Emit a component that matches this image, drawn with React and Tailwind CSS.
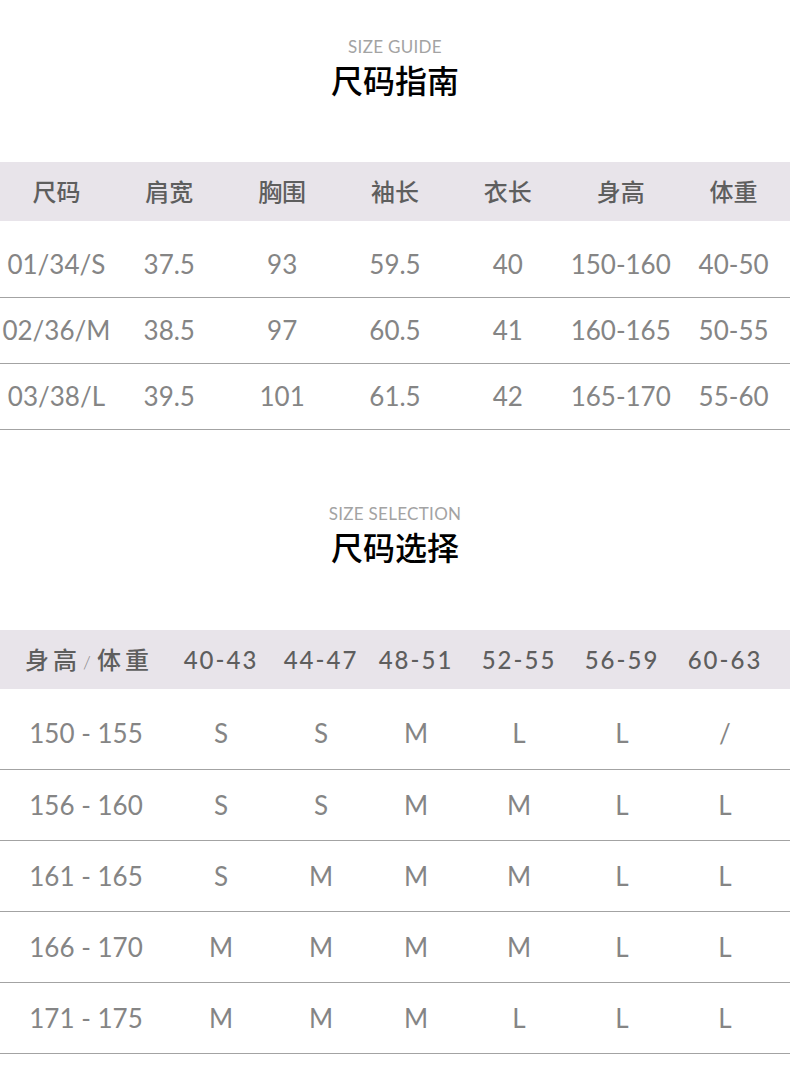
import React from 'react'

const FONT = "font-['Lato','Noto_Sans_CJK_SC',sans-serif]"

const guideHead = ['尺码', '肩宽', '胸围', '袖长', '衣长', '身高', '体重']
const guideRows = [
  ['01/34/S', '37.5', '93', '59.5', '40', '150-160', '40-50'],
  ['02/36/M', '38.5', '97', '60.5', '41', '160-165', '50-55'],
  ['03/38/L', '39.5', '101', '61.5', '42', '165-170', '55-60'],
]

const pickHead = ['40-43', '44-47', '48-51', '52-55', '56-59', '60-63']
const pickRows = [
  ['150 - 155', 'S', 'S', 'M', 'L', 'L', '/'],
  ['156 - 160', 'S', 'S', 'M', 'M', 'L', 'L'],
  ['161 - 165', 'S', 'M', 'M', 'M', 'L', 'L'],
  ['166 - 170', 'M', 'M', 'M', 'M', 'L', 'L'],
  ['171 - 175', 'M', 'M', 'M', 'L', 'L', 'L'],
]

const pickCols = 'grid grid-cols-[172px_98px_102px_88px_118px_88px_118px]'

const Title = ({ en, zh, className = '' }) => (
  <div className={`flex flex-col items-center ${className}`}>
    <div className="text-[17px] leading-[16px] text-[#a3a3a3] tracking-[0.3px]">{en}</div>
    <div className="mt-[6px] text-[32px] leading-[36px] font-medium text-black font-['Noto_Sans_CJK_SC',sans-serif]">{zh}</div>
  </div>
)

export default function App() {
  return (
    <div className={`w-[790px] min-h-[1086px] bg-white ${FONT}`}>
      <Title en="SIZE GUIDE" zh="尺码指南" className="pt-[39px]" />

      <div className="mt-[65px]">
        <div className="grid grid-cols-7 h-[59px] items-center bg-[#e8e4ea] text-[#5e5e5e] text-[24px] font-medium">
          {guideHead.map((h) => (
            <div key={h} className="text-center">{h}</div>
          ))}
        </div>
        {guideRows.map((row, i) => (
          <div
            key={row[0]}
            className={`grid grid-cols-7 items-center border-b border-[#a3a3a3] text-[26px] text-[#858585] ${i === 0 ? 'h-[77px] pt-[10px]' : 'h-[66px]'}`}
          >
            {row.map((c, j) => (
              <div key={j} className="text-center whitespace-nowrap">{c}</div>
            ))}
          </div>
        ))}
      </div>

      <Title en="SIZE SELECTION" zh="尺码选择" className="mt-[76px]" />

      <div className="mt-[66px]">
        <div className={`${pickCols} h-[59px] items-center bg-[#e8e4ea] text-[#5e5e5e] text-[24px] font-medium tracking-[2px]`}>
          <div className="text-center whitespace-nowrap tracking-[4px] pl-[6px]">
            身高<span className="inline-block text-[18px] font-light text-[#8a8a8a] tracking-normal pl-[2px] pr-[6px]">/</span>体重
          </div>
          {pickHead.map((h) => (
            <div key={h} className="text-center whitespace-nowrap">{h}</div>
          ))}
        </div>
        {pickRows.map((row, i) => (
          <div
            key={row[0]}
            className={`${pickCols} items-center border-b border-[#a3a3a3] text-[26px] text-[#858585] ${i === 0 ? 'h-[81px] pt-[9px]' : 'h-[71px]'}`}
          >
            {row.map((c, j) => (
              <div key={j} className="text-center whitespace-nowrap">{c}</div>
            ))}
          </div>
        ))}
      </div>
    </div>
  )
}
